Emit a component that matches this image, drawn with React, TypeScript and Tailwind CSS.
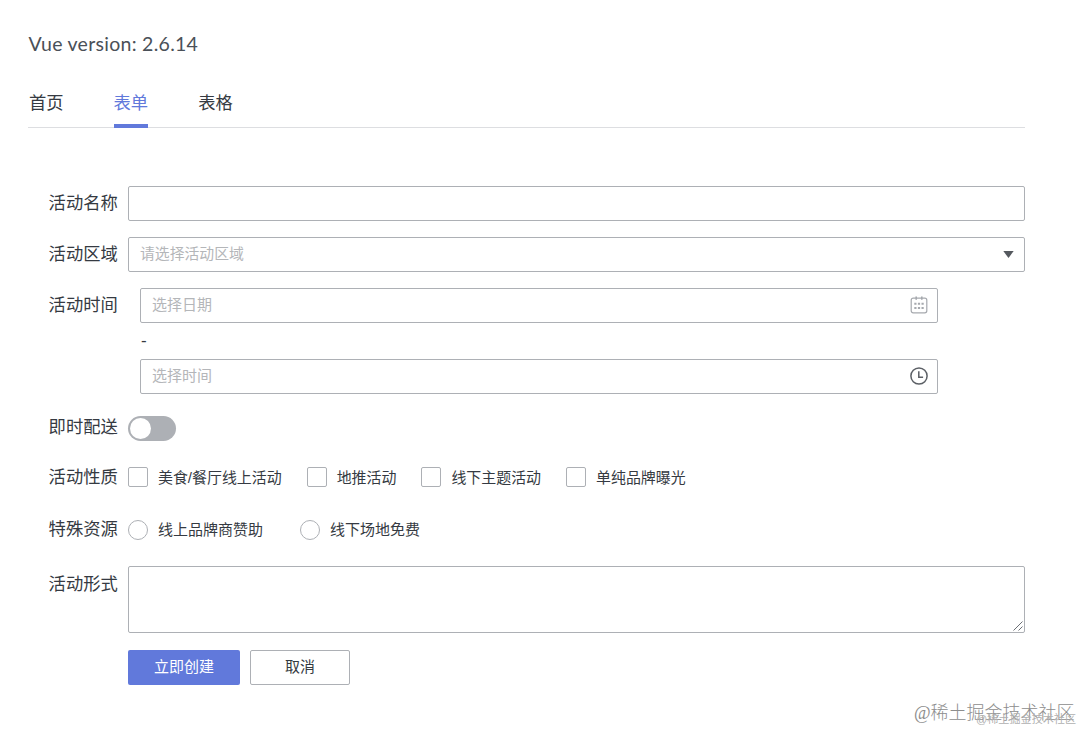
import { useState } from 'react';
import type { ReactNode } from 'react';

const TABS = ['首页', '表单', '表格'];
const NATURES = ['美食/餐厅线上活动', '地推活动', '线下主题活动', '单纯品牌曝光'];
const RESOURCES = ['线上品牌商赞助', '线下场地免费'];

interface RowProps {
  label: string;
  className?: string;
  labelClass?: string;
  children: ReactNode;
}

function FormRow({ label, className = '', labelClass = 'leading-[34px]', children }: RowProps) {
  return (
    <div className={`flex ${className}`}>
      <div className={`w-[100px] shrink-0 pl-[20.6px] text-[17.3px] whitespace-nowrap ${labelClass}`}>
        {label}
      </div>
      <div className="min-w-0 flex-1">{children}</div>
    </div>
  );
}

function CalendarIcon() {
  return (
    <svg width="18" height="18" viewBox="0 0 18 18" fill="none" stroke="#a6a9ae" strokeWidth="1.2">
      <rect x="1.2" y="2.2" width="15.6" height="14.6" rx="2" />
      <path d="M6.2 .6v3.2M11.8 .6v3.2" strokeWidth="1.6" />
      <path d="M4.3 7.7h2.2M7.9 7.7h2.2M11.5 7.7h2.2M4.3 12h2.2M7.9 12h2.2M11.5 12h2.2" strokeWidth="2" />
    </svg>
  );
}

function ClockIcon() {
  return (
    <svg width="18" height="18" viewBox="0 0 18 18" fill="none" stroke="#5c6066" strokeWidth="1.5">
      <circle cx="9" cy="9" r="8.1" />
      <path d="M8.8 4.2v6h4.3" />
    </svg>
  );
}

interface PickerProps {
  placeholder: string;
  icon: ReactNode;
}

function Picker({ placeholder, icon }: PickerProps) {
  return (
    <div className="ml-3 flex h-[35px] w-[798px] items-center justify-between rounded-[2px] border border-[#adb0b5] pr-[9px] pb-px pl-[11px] text-[15px]">
      <span className="pt-px text-[#b4b6b9]">{placeholder}</span>
      {icon}
    </div>
  );
}

export default function App() {
  const [tab, setTab] = useState(1);
  const [natures, setNatures] = useState<string[]>([]);
  const [resource, setResource] = useState('');
  const [instant, setInstant] = useState(false);

  function toggleNature(name: string) {
    setNatures((prev) =>
      prev.includes(name) ? prev.filter((n) => n !== name) : [...prev, name],
    );
  }

  return (
    <div className="relative h-[729px] w-[1080px] overflow-hidden bg-white pt-[29px] pr-[55px] pl-7 font-['Liberation_Sans','Noto_Sans_CJK_SC',sans-serif] text-[#353a42]">
      <h1 className="pl-[0.5px] font-[Lato,sans-serif] text-[19.5px] leading-[30px] tracking-[0.28px] text-[#4a5058]">
        Vue version: 2.6.14
      </h1>

      <nav className="mt-[27px] flex h-[42px] gap-[50px] border-b border-[#dddee1] pl-px">
        {TABS.map((name, i) => (
          <button
            key={name}
            type="button"
            onClick={() => setTab(i)}
            className={`h-[42px] border-b-4 pb-[12px] text-[17.3px] leading-[34px] ${
              i === tab ? 'border-[#6179db] text-[#6179db]' : 'border-transparent'
            }`}
          >
            {name}
          </button>
        ))}
      </nav>

      <form className="mt-[58px]" onSubmit={(e) => e.preventDefault()}>
        <FormRow label="活动名称">
          <input
            aria-label="活动名称"
            className="block h-[35px] w-full rounded-[2px] border border-[#adb0b5] px-[11px] text-[15px] outline-none"
          />
        </FormRow>

        <FormRow label="活动区域" className="mt-4">
          <div className="flex h-[35px] items-center justify-between rounded-[2px] border border-[#adb0b5] pr-[10px] pl-[11px] text-[15px]">
            <span className="text-[14.85px] text-[#b4b6b9]">请选择活动区域</span>
            <svg width="11" height="7" viewBox="0 0 11 7" fill="#55595f">
              <path d="M.3 0h10.4L5.5 7z" />
            </svg>
          </div>
        </FormRow>

        <FormRow label="活动时间" className="mt-4">
          <Picker placeholder="选择日期" icon={<CalendarIcon />} />
          <div className="h-9 pl-[13px] text-[17px] leading-[35px]">-</div>
          <Picker placeholder="选择时间" icon={<ClockIcon />} />
        </FormRow>

        <FormRow label="即时配送" className="mt-4">
          <button
            type="button"
            role="switch"
            aria-checked={instant}
            aria-label="即时配送"
            onClick={() => setInstant(!instant)}
            className={`mt-[6px] flex h-[25px] w-12 items-center rounded-full px-[2px] ${
              instant ? 'justify-end bg-[#6179db]' : 'bg-[#adb0b5]'
            }`}
          >
            <span className="size-[21px] rounded-full bg-white" />
          </button>
        </FormRow>

        <FormRow label="活动性质" className="mt-4">
          <div className="flex h-[35px] items-center gap-[25px] text-[14.95px]">
            {NATURES.map((name) => (
              <label key={name} className="flex items-center gap-[10px]">
                <input
                  type="checkbox"
                  checked={natures.includes(name)}
                  onChange={() => toggleNature(name)}
                  className="size-5 appearance-none rounded-[2px] border border-[#adb0b5] checked:bg-[#6179db]"
                />
                <span className="pt-px">{name}</span>
              </label>
            ))}
          </div>
        </FormRow>

        <FormRow label="特殊资源" className="mt-[17px]">
          <div className="flex h-[35px] items-center gap-[37px] text-[15px]">
            {RESOURCES.map((name) => (
              <label key={name} className="flex items-center gap-[10px]">
                <input
                  type="radio"
                  name="resource"
                  checked={resource === name}
                  onChange={() => setResource(name)}
                  className="size-5 appearance-none rounded-full border border-[#adb0b5] checked:bg-[#6179db]"
                />
                <span className="pt-px">{name}</span>
              </label>
            ))}
          </div>
        </FormRow>

        <FormRow label="活动形式" className="mt-[19px]" labelClass="leading-[36px]">
          <div className="relative">
            <textarea
              aria-label="活动形式"
              className="block h-[67px] w-full resize-none rounded-[2px] border border-[#adb0b5] px-[11px] text-[15px] outline-none"
            />
            <svg
              className="pointer-events-none absolute right-[2px] bottom-[2px]"
              width="10"
              height="10"
              viewBox="0 0 10 10"
              stroke="#6b6f75"
            >
              <path d="M.5 9.5l9-9M5.5 9.5l4-4" />
            </svg>
          </div>
          <div className="mt-[17px] flex gap-[10px] text-[15px]">
            <button type="submit" className="h-[35px] w-28 rounded-[2px] bg-[#6179db] text-white">
              立即创建
            </button>
            <button type="reset" className="h-[35px] w-[100px] rounded-[2px] border border-[#adb0b5]">
              取消
            </button>
          </div>
        </FormRow>
      </form>

      <span className="absolute top-[700px] left-[914px] font-['Liberation_Serif','Noto_Sans_CJK_SC',serif] text-[18px] leading-[26px] font-light whitespace-nowrap text-[#8d8d8d]">
        @稀土掘金技术社区
      </span>
      <span className="absolute top-[711px] left-[976px] text-[11.1px] leading-4 whitespace-nowrap text-[#b0b0b0]">
        @稀土掘金技术社区
      </span>
    </div>
  );
}
